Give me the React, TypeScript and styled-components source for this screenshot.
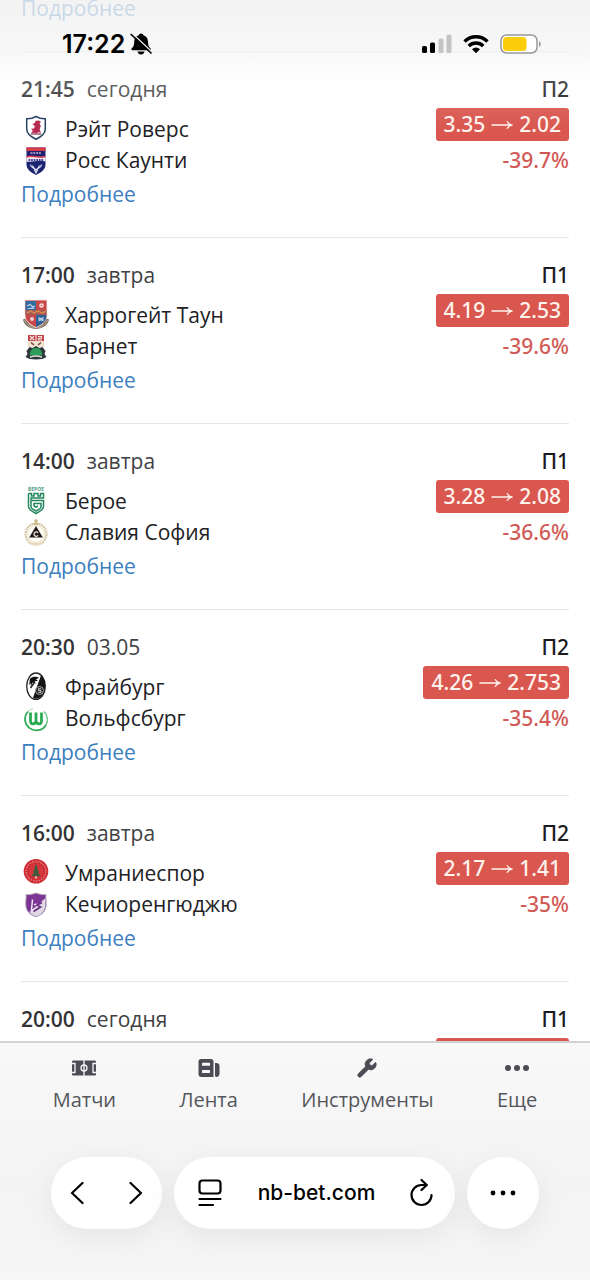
import React from "react";
import styled, { createGlobalStyle, css } from "styled-components";
import { Wrench } from "lucide-react";

const GlobalStyle = createGlobalStyle`
  *, *::before, *::after { box-sizing: border-box; }
  body {
    margin: 0;
    background: #fff;
    color: #212124;
    font-family: "Open Sans", "Noto Sans", sans-serif;
    font-size: 21px;
    line-height: 30px;
  }
  button { font: inherit; color: inherit; background: none; border: 0; padding: 0; cursor: pointer; }
  svg { display: block; }
`;

/* ---------- page frame ---------- */

const Screen = styled.div`
  position: relative;
  display: flex;
  flex-direction: column;
  height: 100vh;
  overflow: hidden;
`;

const MatchList = styled.main`
  flex: 1;
  min-height: 0;
  overflow: hidden;
  padding: 0 21px;
`;

/* ---------- status bar ---------- */

const StatusBar = styled.header`
  position: absolute;
  inset: 0 0 auto;
  display: flex;
  justify-content: space-between;
  padding: 29px 48px 70px 62px;
  background: linear-gradient(
    rgba(240, 240, 241, 0.8) 0,
    rgba(244, 244, 245, 0.7) 52px,
    rgba(250, 250, 250, 0.25) 76px,
    rgba(255, 255, 255, 0.08) 104px,
    rgba(255, 255, 255, 0) 130px
  );
  pointer-events: none;
`;

const StatusGroup = styled.div<{ $gap: number }>`
  display: flex;
  align-items: center;
  gap: ${(p) => p.$gap}px;
`;

const Clock = styled.time`
  font: 600 25px/30px Inter, "Liberation Sans", sans-serif;
  color: #000;
`;

/* ---------- match card ---------- */

const Card = styled.article`
  padding: 22px 0 35px;
  border-bottom: 1px solid #e6e6e6;
`;

const CardTail = styled(Card)`
  padding-top: 0;
`;

const CardBody = styled.div`
  display: flex;
  justify-content: space-between;
  margin-bottom: 10px;
`;

const Info = styled.div`
  display: flex;
  flex-direction: column;
  gap: 10px;
`;

const Kickoff = styled.div`
  display: flex;
  gap: 12px;
  color: #414143;
`;

const Time = styled.time`
  font-weight: 600;
  color: #333335;
`;

const Teams = styled.ul`
  list-style: none;
  margin: 0;
  padding: 0;
`;

const Team = styled.li`
  display: flex;
  align-items: center;
  gap: 14px;
  line-height: 31px;
`;

const Crest = styled.svg`
  width: 30px;
  height: 30px;
  flex: none;
`;

const Odds = styled.div`
  display: flex;
  flex-direction: column;
  align-items: flex-end;
  gap: 4px;
  font-family: "Noto Sans", "Open Sans", sans-serif;
  font-weight: 500;
`;

const Outcome = styled.span`
  color: #1c1c1f;
`;

const Shift = styled.span`
  display: flex;
  align-items: center;
  justify-content: center;
  gap: 6px;
  min-width: 133px;
  height: 33px;
  padding: 0 8px 2px;
  border-radius: 3px;
  background: #d9574f;
  color: #fff3ee;
`;

const Percent = styled.span`
  color: #d25a56;
`;

const DetailsLink = styled.a`
  display: block;
  width: max-content;
  line-height: 16px;
  color: #3d7fbf;
  text-decoration: none;
`;

/* ---------- bottom area ---------- */

const Bottom = styled.footer`
  border-top: 2px solid #d2d2d4;
  background: linear-gradient(#f8f8f9, #f4f4f5 60%, #f6f6f7);
`;

const Tabs = styled.nav`
  display: flex;
  justify-content: space-around;
  padding: 14px 21px 43px;
`;

const Tab = styled.a`
  display: flex;
  flex-direction: column;
  align-items: center;
  gap: 7px;
  font-size: 20px;
  line-height: 28px;
  color: #55565b;
  text-decoration: none;
`;

const TabIcon = styled.span`
  display: flex;
  align-items: center;
  height: 22px;
  color: #4b4c54;
`;

const Browser = styled.div`
  display: flex;
  gap: 12px;
  padding: 0 51px 51px;
  color: #000;
`;

const pill = css`
  display: flex;
  align-items: center;
  height: 72px;
  border-radius: 36px;
  background: #fff;
  box-shadow: 0 8px 32px rgba(0, 0, 0, 0.07);
`;

const HistoryPill = styled.div`
  ${pill}
  gap: 31px;
  padding: 0 12px;
`;

const AddressPill = styled.div`
  ${pill}
  flex: 1;
  justify-content: space-between;
  padding: 0 20px;
`;

const MorePill = styled.button`
  ${pill}
  && {
    background: #fff;
    color: #000;
  }
  justify-content: center;
  width: 72px;
`;

const ToolButton = styled.button<{ $width?: number }>`
  display: flex;
  align-items: center;
  justify-content: center;
  width: ${(p) => p.$width ?? 28}px;
  height: 44px;
`;

const Address = styled.span`
  font: 500 21px/30px Inter, "Liberation Sans", sans-serif;
`;

/* ---------- crests ---------- */

const crests: Record<string, React.ReactNode> = {
  raith: (
    <>
      <path d="M15 1.500c2.600 1.700 5.800 2.400 9.300 2.300v10c0 4.800-3.600 7.900-9.300 10.400-5.700-2.500-9.300-5.600-9.300-10.400v-10c3.500.1 6.700-.6 9.300-2.300Z" fill="#fff" stroke="#23405f" strokeWidth="1.500" />
      <path d="M11.500 9l2.200-1 1-2.200 3.300-.3 2 1.500-1.400 1.500 1.200 2.500-1.200 3.800 1.500 3-3-.5-1.500 1-2.600-.5-3 .4 1.800-2.200-1.600-2.500 2.400.3 1.300-2.300Z" fill="#b62a50" />
      <path d="M10 19h10" stroke="#9a5670" strokeWidth="1.500" />
    </>
  ),
  ross: (
    <>
      <path d="M5.500 1.500h19v17c0 5-4.500 8-9.500 10.500-5-2.500-9.500-5.500-9.500-10.500Z" fill="#1c2272" />
      <path d="M5.500 1.500h19v3.500h-19Z" fill="#d93a48" />
      <path d="M5.500 10.500c6-2 12 2 19-.5v5.500c-7-2-13 1-19 0Z" fill="#f4eef4" />
      <path d="M5.500 10.200c6-2 12 2 19-.5v1.600c-7 2-13-2-19 .5Z" fill="#d93a48" />
      <path d="M9.500 7h11" stroke="#9c8cba" strokeWidth="2" strokeDasharray="2 .8" />
      <path d="M7.500 14h15" stroke="#3a3f8a" strokeWidth="2" strokeDasharray="1.700 .9" />
      <path d="M9.500 18.500c.2 3 2.500 3.500 5.500 5 3-1.500 5.300-2 5.500-5M11.500 19.500l1.500 2.500M18.500 19.500 17 22M13.500 24l1.500 3 1.500-3Z" fill="none" stroke="#e6e7f6" strokeWidth="1.100" />
    </>
  ),
  harrogate: (
    <>
      <path d="M2 18.500c2 12.500 24 12.500 26 0l-2.500-1-4 6c-3 2.500-10 2.500-13 0l-4-6Z" fill="#7e6e60" />
      <path d="M3.500 19c3 10.500 20 10.500 23 0" fill="none" stroke="#b9aa98" strokeWidth="1" />
      <path d="M4 -1h22v15c0 6-4.500 9.500-11 12.500C8.500 23.500 4 20 4 14Z" fill="#c8484a" stroke="#f4eeea" strokeWidth=".8" />
      <path d="M4.500 0h10.500v9H4.500Z" fill="#356c9f" />
      <path d="M15 14h10.500c0 6-4 9-10.500 12Z" fill="#2d6097" />
      <path d="M4.500 9h21v5h-21Z" fill="#a45b55" />
      <path d="M6 5l3-1.500L12 6l2-1M7 8c2-2 4 .5 6-1" fill="none" stroke="#b9d4e8" strokeWidth="1.200" />
      <circle cx="20.500" cy="4.500" r="2.300" fill="#f4dede" />
      <circle cx="20.500" cy="4.500" r=".8" fill="#c8484a" />
      <path d="M6 12l4-2 3 2 4-2 4 2 4-1.500" fill="none" stroke="#d98a4e" strokeWidth="1.500" />
      <circle cx="11" cy="18" r="2" fill="#e8d2d4" />
      <path d="M17.500 16v4.500l2.500-1 2.500 1V16l-2.500 1Z" fill="#b9cee2" />
    </>
  ),
  barnet: (
    <>
      <path d="M7 3h16v12H7Z" fill="#efe5cf" />
      <path d="M7 3h16v6H7Z" fill="#c2434e" />
      <path d="M9 4l4 4M13 4 9 8M15 3v6M17 4.500h3.500v1.800H17.500V8H21" stroke="#f6e6df" strokeWidth="1.100" fill="none" />
      <path d="M10 10.500l3 2.500M20 10.500l-3 2.500" stroke="#7f3f3c" strokeWidth="1.500" />
      <path d="M5.500 19l3-4 3 1 3.500-2 3.500 2 3-1 3 4-1 3 2 3-4 2-6.500.5-6.500-.5-4-2 2-3Z" fill="#30373a" />
      <path d="M9 23.500c-.5-5 2-7.500 6-7.500s6.500 2.500 6 7.500Z" fill="#2e9c58" />
      <path d="M9 25.200c4-1.500 8-1.500 12 0" fill="none" stroke="#dcdad0" strokeWidth="1.500" />
    </>
  ),
  beroe: (
    <>
      <text x="15" y="4" textAnchor="middle" fontFamily="Open Sans, sans-serif" fontWeight="700" fontSize="5" fill="#4c9a80">БЕРОЕ</text>
      <path d="M7.500 6.500v13c0 3 3.500 5 7.500 7 4-2 7.500-4 7.500-7v-6h-12" fill="none" stroke="#23865f" strokeWidth="1.500" />
      <path d="M7.500 6.500h3v2.500h2.500V6.500h4v2.500h2.500V6.500h3v4.500h-12.500v9c0 1.500 2 2.500 5 4 3-1.500 5-2.500 5-4v-3.500h-7v2.500l2 1.200 2-1.200" fill="none" stroke="#23865f" strokeWidth="1.500" />
    </>
  ),
  slavia: (
    <>
      <circle cx="15" cy="16" r="10.500" fill="none" stroke="#d6c6a0" strokeWidth="2" strokeDasharray="2 .6" />
      <circle cx="15" cy="16" r="8.500" fill="#fffdf6" stroke="#e2d6b8" strokeWidth=".8" />
      <path d="M15 1v5M13 3h4M12 6h6" stroke="#bda670" strokeWidth="1.200" />
      <path d="M15 8l6.800 11.500H8.200Z" fill="#1d1a17" />
      <path d="M17 14.800a2.200 2.200 0 1 0 0 2.600" fill="none" stroke="#f3ead6" strokeWidth="1.300" />
      <path d="M7.500 24.500c5 2.500 10 2.500 15 0" fill="none" stroke="#ead8bf" strokeWidth="2.500" />
    </>
  ),
  freiburg: (
    <>
      <ellipse cx="15" cy="13.200" rx="9.300" ry="13.200" fill="#fff" stroke="#222" strokeWidth="1.300" />
      <path d="M20 2.200c4 4 5 9.500 3.500 15-1.500 5-4.500 8.500-9 8.500L12 24.700Z" fill="#151515" />
      <path d="M9 5.500c3-2.300 6-2.300 9-.8l-3 1.800 2 1.500-3.500.3 1.500 2.500-3.500-1.300-1.500 3.800-.5-3.200-1.500 2.500Z" fill="#111" />
      <path d="M9.500 15l3.500-5" stroke="#222" strokeWidth="1.500" />
      <circle cx="18.500" cy="17.500" r="4" fill="#292929" stroke="#aaa" strokeWidth=".9" />
      <path d="M20 15.700h-2.500v1.800H20v1.900h-2.700" fill="none" stroke="#ddd" strokeWidth=".9" />
    </>
  ),
  wolfsburg: (
    <>
      <path d="M7 7.500A11.300 11.300 0 1 0 25 21" fill="none" stroke="#2fae57" strokeWidth="1.800" />
      <path d="M23 7.500A11.300 11.300 0 0 1 25 21" fill="none" stroke="#63c283" strokeWidth="1.300" />
      <path d="M7 7.500A11.300 11.300 0 0 1 12 4.500" fill="none" stroke="#9bd8ad" strokeWidth="1" />
      <path d="M9.500 8.500v8.500c0 3.800 4.800 3.800 5.500 0V8.500m0 8.500c.7 3.800 5.500 3.800 5.500 0V8.500" fill="none" stroke="#26a94f" strokeWidth="2.700" />
    </>
  ),
  umraniye: (
    <>
      <circle cx="15" cy="12.300" r="12.300" fill="#cf2c34" />
      <circle cx="15" cy="12.300" r="9.800" fill="none" stroke="#e07a7c" strokeWidth="1.500" strokeDasharray="1.600 1.200" />
      <circle cx="15" cy="12.300" r="7.500" fill="#d7363b" />
      <path d="M15 5.300l2 4-1 .2 2.200 3.600-1.200.2 2.500 4h-9l2.500-4-1.200-.2 2.200-3.600-1-.2Z" fill="#3f5b3c" />
      <path d="M14.200 17.300h1.600v2.500h-1.600Z" fill="#e8c9b8" />
    </>
  ),
  kecioren: (
    <>
      <path d="M5 4.500c3.500.5 6-.2 10-1.500 4 1.300 6.500 2 10 1.500-.5 3 .3 5 .3 9 0 8-4.300 11-10.300 13.500-6-2.500-10.300-5.500-10.300-13.500 0-4 .8-6 .3-9Z" fill="#7c3595" stroke="#b4a9bb" strokeWidth="1" />
      <path d="M24.500 8v7c-.5 6-4 9.500-9.500 11.500-3-1.200-5-2.500-6.500-4.500Z" fill="#ddd8e2" />
      <path d="M11.500 9.500l-1 10.500h4M13 14.500h4" fill="none" stroke="#f1eaf4" strokeWidth="1.500" />
      <path d="M21 12.500l-5 2.500 3.500 2-7 4.500" fill="none" stroke="#6b2c86" strokeWidth="1.700" />
    </>
  ),
};

/* ---------- data ---------- */

type Side = { name: string; crest: string };
type Match = {
  time: string;
  day: string;
  outcome: string;
  teams: Side[];
  shift?: [string, string];
  percent?: string;
};

const matches: Match[] = [
  { time: "21:45", day: "сегодня", outcome: "П2", shift: ["3.35", "2.02"], percent: "-39.7%", teams: [{ name: "Рэйт Роверс", crest: "raith" }, { name: "Росс Каунти", crest: "ross" }] },
  { time: "17:00", day: "завтра", outcome: "П1", shift: ["4.19", "2.53"], percent: "-39.6%", teams: [{ name: "Харрогейт Таун", crest: "harrogate" }, { name: "Барнет", crest: "barnet" }] },
  { time: "14:00", day: "завтра", outcome: "П1", shift: ["3.28", "2.08"], percent: "-36.6%", teams: [{ name: "Берое", crest: "beroe" }, { name: "Славия София", crest: "slavia" }] },
  { time: "20:30", day: "03.05", outcome: "П2", shift: ["4.26", "2.753"], percent: "-35.4%", teams: [{ name: "Фрайбург", crest: "freiburg" }, { name: "Вольфсбург", crest: "wolfsburg" }] },
  { time: "16:00", day: "завтра", outcome: "П2", shift: ["2.17", "1.41"], percent: "-35%", teams: [{ name: "Умраниеспор", crest: "umraniye" }, { name: "Кечиоренгюджю", crest: "kecioren" }] },
  { time: "20:00", day: "сегодня", outcome: "П1", teams: [] },
];

/* ---------- icons ---------- */

const BellOff = () => (
  <svg width="22" height="22" viewBox="0 0 22 22" aria-hidden="true">
    <path d="M11 .5c1.300 0 2.200.8 2.400 1.800 3 .8 4.500 3.200 4.600 6.400.1 4 1 5.300 2.400 6.500.8.700.5 2-.7 2H2.500c-1.200 0-1.500-1.300-.7-2 1.400-1.200 2.300-2.500 2.400-6.500.1-3.200 1.600-5.600 4.600-6.400C9 1.300 9.700.5 11 .5Z" fill="#000" />
    <path d="M7.500 18.500h7c-.3 1.800-1.700 3-3.500 3s-3.200-1.200-3.500-3Z" fill="#000" />
    <path d="M2.500 .7 22.500 19.300" stroke="#f5f5f6" strokeWidth="1.300" />
    <path d="M1.200 1.500 21 20" stroke="#000" strokeWidth="1.700" strokeLinecap="round" />
  </svg>
);

const Signal = () => (
  <svg width="30" height="20" viewBox="0 0 30 20" aria-hidden="true">
    <rect x="0" y="12" width="5" height="7" rx="1.500" fill="#000" />
    <rect x="8" y="8.500" width="5" height="10.500" rx="1.500" fill="#000" />
    <rect x="16.500" y="4.500" width="5" height="14.500" rx="1.500" fill="#c4c4c5" />
    <rect x="24.500" y="0.500" width="5" height="18.500" rx="1.500" fill="#c4c4c5" />
  </svg>
);

const Wifi = () => (
  <svg width="26" height="20" viewBox="0 0 26 20" aria-hidden="true">
    <g fill="none" stroke="#000" strokeWidth="3.300">
      <path d="M1.500 7.500a16.300 16.300 0 0 1 23 0" />
      <path d="M5.700 12a10.400 10.400 0 0 1 14.600 0" />
    </g>
    <path d="M9 15.200a5.700 5.700 0 0 1 8 0L13 19.300Z" fill="#000" />
  </svg>
);

const Battery = () => (
  <svg width="42" height="20" viewBox="0 0 42 20" aria-hidden="true">
    <rect x="1" y="1" width="36" height="18" rx="5.500" fill="#fff" stroke="#98989a" strokeWidth="1.500" />
    <rect x="3" y="3" width="23.500" height="14" rx="3.500" fill="#fbcd0a" />
    <path d="M39 7.200c2.300.7 2.300 5 0 5.700Z" fill="#98989a" />
  </svg>
);

const Arrow = () => (
  <svg width="22" height="12" viewBox="0 0 22 12" role="img" aria-label="→">
    <path d="M.5 7H20M16 3.200c1 2 2.500 3.200 4.700 3.800-2.200.6-3.700 1.800-4.700 3.800" fill="none" stroke="currentColor" strokeWidth="1.300" />
  </svg>
);

const Pitch = () => (
  <svg width="24" height="16" viewBox="0 0 24 16" aria-hidden="true">
    <rect y=".5" width="24" height="15" rx="1.200" fill="currentColor" />
    <g fill="none" stroke="#f8f8f9" strokeWidth="1.300">
      <path d="M12 0v5M12 11v5M0 3.500h3v9H0M24 3.500h-3v9h3" />
      <circle cx="12" cy="8" r="3" />
    </g>
    <rect x="11.300" y="5.500" width="1.400" height="5" fill="#f8f8f9" />
  </svg>
);

const News = () => (
  <svg width="22" height="20" viewBox="0 0 22 20" aria-hidden="true">
    <path d="M3 1h10a2.500 2.500 0 0 1 2.500 2.500V19H3.500A3 3 0 0 1 .5 16V3.500A2.500 2.500 0 0 1 3 1Z" fill="currentColor" />
    <path d="M17 5h1.500c1.700 0 3 1.300 3 3v7.500c0 2-1.300 3.500-3 3.500-1 0-1.500-.7-1.500-1.500Z" fill="currentColor" />
    <rect x="4" y="4.700" width="8" height="3" rx=".5" fill="#f8f8f9" />
    <rect x="4" y="12" width="8" height="3" rx=".5" fill="#f8f8f9" />
  </svg>
);

const Dots = ({ r, step }: { r: number; step: number }) => (
  <svg width="26" height="8" viewBox="-13 -4 26 8" fill="currentColor" aria-hidden="true">
    <circle cx={-step} r={r} />
    <circle r={r} />
    <circle cx={step} r={r} />
  </svg>
);

const Chevron = ({ d }: { d: string }) => (
  <svg width="14" height="24" viewBox="0 0 14 24" fill="none" stroke="#000" strokeWidth="2.200" strokeLinecap="round" strokeLinejoin="round" aria-hidden="true">
    <path d={d} />
  </svg>
);

const Reader = () => (
  <svg width="24" height="28" viewBox="0 0 24 28" fill="none" stroke="#000" strokeWidth="2.200" strokeLinecap="round" aria-hidden="true">
    <rect x="1.500" y="1.500" width="21" height="13" rx="3" />
    <path d="M1.500 20h21M1.500 26H15" />
  </svg>
);

const Reload = () => (
  <svg width="24" height="28" viewBox="0 0 24 28" fill="none" stroke="#000" strokeWidth="2.200" strokeLinecap="round" strokeLinejoin="round" aria-hidden="true">
    <path d="M22.500 16A10 10 0 1 1 12.500 6h5" />
    <path d="M12.500 1l5.200 5-5.200 5" />
  </svg>
);

const tabs = [
  { label: "Матчи", icon: <Pitch /> },
  { label: "Лента", icon: <News /> },
  { label: "Инструменты", icon: <Wrench size={22} fill="currentColor" strokeWidth={1} /> },
  { label: "Еще", icon: <Dots r={3} step={9} /> },
];

const MatchCard = ({ match }: { match: Match }) => (
  <Card>
    <CardBody>
      <Info>
        <Kickoff>
          <Time>{match.time}</Time>
          <span>{match.day}</span>
        </Kickoff>
        <Teams>
          {match.teams.map((team) => (
            <Team key={team.name}>
              <Crest viewBox="0 0 30 30" overflow="visible" aria-hidden="true">{crests[team.crest]}</Crest>
              {team.name}
            </Team>
          ))}
        </Teams>
      </Info>
      <Odds>
        <Outcome>{match.outcome}</Outcome>
        <Shift>
          {match.shift && (
            <>
              <span>{match.shift[0]}</span>
              <Arrow />
              <span>{match.shift[1]}</span>
            </>
          )}
        </Shift>
        {match.percent && <Percent>{match.percent}</Percent>}
      </Odds>
    </CardBody>
    {match.teams.length > 0 && <DetailsLink href="#match">Подробнее</DetailsLink>}
  </Card>
);

export default function App() {
  return (
    <Screen>
      <GlobalStyle />
      <MatchList>
        <CardTail>
          <DetailsLink href="#match">Подробнее</DetailsLink>
        </CardTail>
        {matches.map((match) => (
          <MatchCard key={match.time} match={match} />
        ))}
      </MatchList>

      <StatusBar>
        <StatusGroup $gap={5}>
          <Clock>17:22</Clock>
          <BellOff />
        </StatusGroup>
        <StatusGroup $gap={11}>
          <Signal />
          <Wifi />
          <Battery />
        </StatusGroup>
      </StatusBar>

      <Bottom>
        <Tabs>
          {tabs.map((tab) => (
            <Tab key={tab.label} href="#tab">
              <TabIcon>{tab.icon}</TabIcon>
              {tab.label}
            </Tab>
          ))}
        </Tabs>
        <Browser>
          <HistoryPill>
            <ToolButton aria-label="Назад"><Chevron d="M12.500 2 2 12l10.500 10" /></ToolButton>
            <ToolButton aria-label="Вперёд"><Chevron d="M1.500 2 12 12 1.500 22" /></ToolButton>
          </HistoryPill>
          <AddressPill>
            <ToolButton $width={32} aria-label="Режим чтения"><Reader /></ToolButton>
            <Address>nb-bet.com</Address>
            <ToolButton $width={28} aria-label="Обновить"><Reload /></ToolButton>
          </AddressPill>
          <MorePill aria-label="Меню"><Dots r={2.4} step={10} /></MorePill>
        </Browser>
      </Bottom>
    </Screen>
  );
}
